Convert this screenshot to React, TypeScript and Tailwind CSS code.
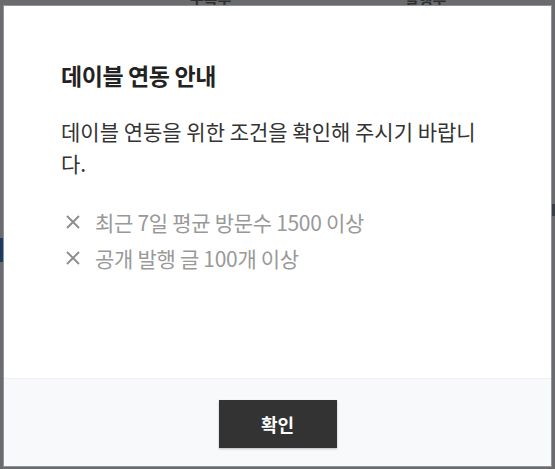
const conditions = ["최근 7일 평균 방문수 1500 이상", "공개 발행 글 100개 이상"];

const CrossIcon = () => (
  <svg viewBox="0 0 14 14" className="h-[14px] w-[14px] shrink-0" fill="none" stroke="#8c8c8c" strokeWidth={1.9}>
    <path d="M1 1L13 13M13 1L1 13" />
  </svg>
);

export default function App() {
  return (
    <div
      className="relative h-[469px] w-[555px] overflow-hidden bg-[#6b6b6b] pl-[3px] pt-[5px]"
      style={{ fontFamily: '"Noto Sans CJK KR", "Noto Sans", sans-serif' }}
    >
      {/* page behind the dimmed backdrop */}
      <div className="absolute left-[190px] top-[-12px] text-[15px] font-bold text-[#2f2f2f]">구독수</div>
      <div className="absolute left-[405px] top-[-12px] text-[15px] font-bold text-[#2f2f2f]">발행수</div>
      <div className="absolute left-0 top-[238px] h-[24px] w-[3px] bg-[#1e3a5c]" />
      <div className="absolute right-0 top-[204px] h-[12px] w-[3px] bg-[#3a3f47]" />

      <div className="relative flex h-[462px] w-[549px] flex-col border border-[#8d95a4] bg-white">
        <div className="flex-1 pl-[57px] pr-[63px] pt-[54px]">
          <h2 className="text-[23px] font-bold leading-[30px] tracking-[-0.4px] text-[#222]">데이블 연동 안내</h2>
          <p className="mt-[25px] text-[21px] leading-[32px] text-[#333]">
            데이블 연동을 위한 조건을 확인해 주시기 바랍니다.
          </p>
          <ul className="mt-[25px]">
            {conditions.map((c) => (
              <li key={c} className="flex items-center gap-[15px] pl-[5px] text-[21px] leading-[36px] tracking-[-0.3px] text-[#999]">
                <CrossIcon />
                {c}
              </li>
            ))}
          </ul>
        </div>
        <div className="flex h-[88px] justify-center border-t border-[#eef0f3] bg-[#f8f9fb] pt-[21px]">
          <button className="h-[48px] w-[118px] bg-[#333] text-[18px] font-bold text-white shadow-[0_1px_2px_rgba(0,0,0,0.25)]">
            확인
          </button>
        </div>
      </div>
    </div>
  );
}
